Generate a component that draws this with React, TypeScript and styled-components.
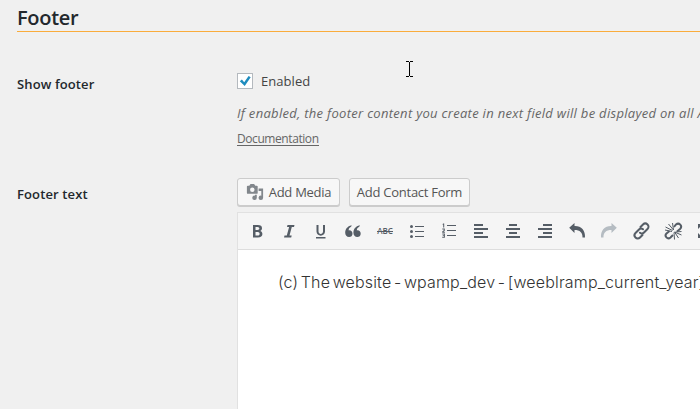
import React from "react";
import styled, { createGlobalStyle } from "styled-components";

const Global = createGlobalStyle`
  * { box-sizing: border-box; }
  body { margin: 0; background: #f0f0f0; overflow: hidden; color: #444;
    font: 14px/20px "Open Sans", "Noto Sans", sans-serif; }
`;
const Page = styled.main`height: 409px; width: 700px; padding-left: 17px; overflow: hidden; background: #f0f0f0;`;
const Title = styled.h2`
  margin: 0; height: 32px; padding-top: 4px; border-bottom: 1px solid #faac3c;
  font-size: 20px; line-height: 28px; font-weight: 600; color: #23282d; letter-spacing: -0.3px;
`;
const Row = styled.section<{ $top: number }>`
  display: grid; grid-template-columns: 220px 1000px; padding-top: ${p => p.$top}px;
`;
const Label = styled.h3<{ $top: number }>`
  margin: 0; padding-top: ${p => p.$top}px; font-size: 13px; line-height: 20px; font-weight: 600; color: #23282d; letter-spacing: 0.12px;
`;
const Field = styled.div`display: flex; flex-direction: column; align-items: flex-start;`;
const CheckLine = styled.label`display: flex; align-items: center; height: 20px; gap: 8px; font-size: 13px; letter-spacing: 0.05px;`;
const Box = styled.span`
  width: 16px; height: 16px; border: 1px solid #b4b9be; background: #fff; display: flex; align-items: center; justify-content: center;
`;
const Hint = styled.p`margin: 12px 0 0; height: 20px; white-space: nowrap; font-size: 13px; font-style: italic; color: #666; letter-spacing: 0.3px;`;
const DocLink = styled.a`
  margin-top: 7px; height: 16px; line-height: 17px; font-size: 12px; color: #666; border-bottom: 1px solid #666; letter-spacing: -0.42px;
`;
const Buttons = styled.div`display: flex; gap: 9px; height: 28px;`;
const Button = styled.button<{ $w: number }>`
  width: ${p => p.$w}px; height: 28px; padding: 0 0 1px; display: flex; align-items: center; justify-content: center; gap: 5px; white-space: nowrap;
  border: 1px solid #ccc; border-radius: 3px; background: #f7f7f7; box-shadow: 0 1px 0 #ccc;
  font: 13px/20px "Open Sans", sans-serif; color: #555; letter-spacing: -0.26px;
`;
const Editor = styled.div`margin-top: 6px; width: 1000px; height: 220px; border: 1px solid #e1e1e1; background: #fff;`;
const Toolbar = styled.div`
  height: 37px; padding: 0 0 0 3px; display: flex; align-items: center; background: #f5f5f5; border-bottom: 1px solid #ddd;
`;
const Tool = styled.span`width: 32px; height: 28px; flex: none; display: flex; align-items: center; justify-content: center; color: #555d66;`;
const Content = styled.div`
  padding: 21px 0 0 40px; white-space: nowrap; font: 300 16px/22px Inter, "Liberation Sans", sans-serif; color: #333;
  word-spacing: -2.1px; letter-spacing: 0.16px;
`;
const Cursor = styled.svg`position: absolute; left: 405px; top: 61px;`;
const Abc = styled.text`font: 600 8px "Open Sans", sans-serif; fill: #555d66;`;

const Icon = ({ children }: { children: React.ReactNode }) => (
  <Tool><svg width="20" height="20" viewBox="0 0 20 20" fill="currentColor">{children}</svg></Tool>
);
const AlignLines = ({ top, mid, w }: { top: number; mid: number; w: number }) => (
  <path d={`M${top} 3h${w}v2h-${w}zM3 7h14v2H3zM${mid} 11h${w}v2h-${w}zM3 15h14v2H3z`} />
);
const listLines = <path d="M8 4h9v1H8zM8 9h9v1H8zM8 14h9v1H8z" />;

export default function App() {
  return (
    <Page>
      <Global />
      <Title>Footer</Title>
      <Row $top={39}>
        <Label $top={3}>Show footer</Label>
        <Field>
          <CheckLine>
            <Box><svg width="14" height="14" viewBox="0 0 14 14"><path d="M1.800 7.300 3.900 5.600l2.300 2.600L10.600 2l2.100 1.300-6 8.700z" fill="#1e8cbe" /></svg></Box>
            Enabled
          </CheckLine>
          <Hint>If enabled, the footer content you create in next field will be displayed on all AMP pages.</Hint>
          <DocLink>Documentation</DocLink>
        </Field>
      </Row>
      <Row $top={32}>
        <Label $top={6}>Footer text</Label>
        <div>
          <Buttons>
            <Button $w={103}>
              <svg width="18" height="18" viewBox="0 0 20 20" fill="#82878c"><path fillRule="evenodd" d="M13 11V4c0-.55-.45-1-1-1h-1.670L9 1H5L3.670 3H2c-.55 0-1 .45-1 1v7c0 .55.45 1 1 1h10c.55 0 1-.45 1-1zM7 5a2.500 2.500 0 1 1 0 5 2.500 2.500 0 0 1 0-5zM14 6h5v10.500a2.500 2.500 0 1 1-2-2.450V9h-3zm-4 8.050V13h2v3.500a2.500 2.500 0 1 1-2-2.450z" /></svg>
              Add Media
            </Button>
            <Button $w={121}>Add Contact Form</Button>
          </Buttons>
          <Editor>
            <Toolbar>
              <Icon><path fillRule="evenodd" d="M6 4h4.700c3 0 4.300 1.200 4.300 3.200 0 1.500-.8 2.500-2 2.800 1.500.3 2.400 1.400 2.400 3 0 2.200-1.600 3.600-4.600 3.600H6zM8.500 6v3h2c2.500 0 2.500-3 0-3zm0 5v3.600h2.200c2.600 0 2.600-3.600 0-3.600z" /></Icon>
              <Icon><path d="M8.500 4h7l-.5 2h-2.200l-2.300 8.500h2.200l-.5 2H5l.5-2h2.300L10.100 6H8z" /></Icon>
              <Icon><path d="M5.500 4h2v6.500c0 3.200 4.500 3.200 4.500 0V4h2v6.500c0 5.500-8.500 5.500-8.500 0zM5 16h9.500v1.500H5z" /></Icon>
              <Icon><path d="M9.500 12.700c0 2-1.400 3.300-3.400 3.300-2.300 0-3.900-1.600-3.900-4.200C2.200 8 4.300 5.300 8.500 4.200c.3 1-.6 1.500-1.500 2.200-1 .8-1.400 1.700-1.300 3 2.300-.3 3.800 1.200 3.800 3.300zm8.200 0c0 2-1.400 3.300-3.400 3.300-2.300 0-3.900-1.600-3.900-4.200 0-3.800 2.100-6.500 6.300-7.600.3 1-.6 1.500-1.500 2.200-1 .8-1.400 1.700-1.300 3 2.300-.3 3.800 1.200 3.800 3.300z" /></Icon>
              <Icon><Abc x="2.200" y="13">ABC</Abc><path d="M2 10h16v1H2z" /></Icon>
              <Icon><circle cx="4.500" cy="5.500" r="1.500" /><circle cx="4.500" cy="10.500" r="1.500" /><circle cx="4.500" cy="15.500" r="1.500" /><path d="M8 5h9v1H8zM8 10h9v1H8zM8 15h9v1H8z" /></Icon>
              <Icon><path d="M4 2.500h1.200v4H4.200v-2.800H3.500zM3.300 7.500h2.500v2.300l-1.400 1h1.500v.9H3.200v-1.300l1.600-1.200v-.8H3.300zM3.300 12.500h2.600v4.200H3.200v-.9h1.700v-.8H3.700v-.8h1.200v-.8H3.300z" />{listLines}</Icon>
              <Icon><AlignLines top={3} mid={3} w={9} /></Icon>
              <Icon><AlignLines top={6} mid={6} w={8} /></Icon>
              <Icon><AlignLines top={8} mid={8} w={9} /></Icon>
              <Icon><path d="M7.500 2v3C14 4.700 18.500 9 18 16.500h-2.500c.2-5-2.500-7.500-8-7.500v3L2.200 6.800z" /></Icon>
              <Icon><path fill="#b5bcc2" d="M12.500 2v3C6 4.700 1.500 9 2 16.500h2.500c-.2-5 2.500-7.500 8-7.500v3l5.300-5.200z" /></Icon>
              <Icon><g fill="none" stroke="currentColor" strokeWidth="2" strokeLinecap="round"><path d="m9.500 6 2.500-2.500c3-3 7.500 1.500 4.500 4.500L13 11.500c-1.200 1.200-2.800 1.200-4 .2M11.500 14 9 16.500c-3 3-7.500-1.500-4.500-4.500L8 8.500c1.200-1.200 2.800-1.200 4-.2" /></g></Icon>
              <Icon><g fill="none" stroke="currentColor" strokeWidth="2"><path d="m11 6 2-2.500c3-2.500 7 1.500 4 4.500l-3 2.500M10 14l-2.500 2.500c-3 2.500-6.500-1.500-4-4L6.500 10" /><path strokeWidth="1" d="M2.500 6l7 3.500M5.500 3l5 6M9.500 2l1 7M2 9l7 1.500M11.500 11l7 3M11.500 11l4 6M11 11.500l.5 7M12.500 11l6-.5" /></g></Icon>
              <Icon><path d="M3 3h5L6.500 4.500 9 7 7.500 8.500 5 6 3 8zM3 17v-5l2 2 2.500-2.500L9 13l-2.500 2.500L8 17z" /></Icon>
            </Toolbar>
            <Content>(c) The website - wpamp_dev - [weeblramp_current_year]</Content>
          </Editor>
        </div>
      </Row>
      <Cursor width="9" height="17" viewBox="0 0 9 17"><path fill="#000" d="M1 0h3v1H1zM5 0h3v1H5zM4 1h1v14H4zM1 15h3v1H1zM5 15h3v1H5z" /></Cursor>
    </Page>
  );
}
